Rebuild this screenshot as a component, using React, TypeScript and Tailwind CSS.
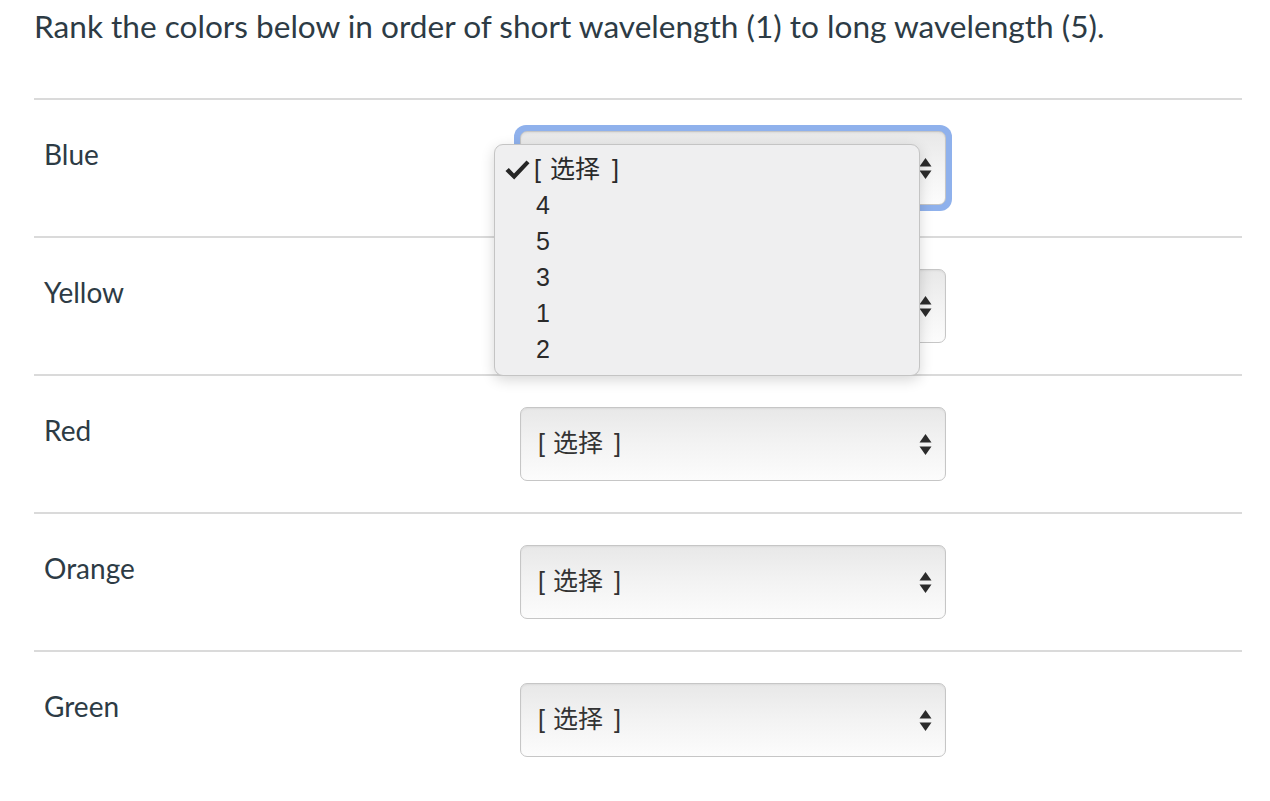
import React from "react";

const Arrows = () => (
  <svg width="13" height="23" viewBox="0 0 13 23" className="shrink-0">
    <path d="M6.5 1 L12.5 9.5 L0.5 9.5 Z" fill="#2b2b2b" />
    <path d="M6.5 22 L12.5 13.5 L0.5 13.5 Z" fill="#2b2b2b" />
  </svg>
);

const Choose = ({ gapL = 8, gapR = 11 }: { gapL?: number; gapR?: number }) => (
  <span className="inline-flex items-center">
    <span>[</span>
    <span style={{ marginLeft: gapL, marginRight: gapR }}>选择</span>
    <span>]</span>
  </span>
);

const Select = ({ focused = false }: { focused?: boolean }) => (
  <div className={focused ? "rounded-[12px] p-[6px] bg-[#8fb1ec] -m-[6px]" : ""}>
    <div className="w-[426px] h-[74px] rounded-[7px] border border-[#c6c6c6] bg-gradient-to-b from-[#e8e8e8] via-[#f3f3f3] to-[#fcfcfc] shadow-[inset_0_1px_2px_rgba(0,0,0,0.06)] flex items-center justify-between pl-[17px] pr-[13px]">
      <span className="text-[25px] text-[#333] font-['Liberation_Sans','Noto_Sans_CJK_SC',sans-serif]">
        {focused ? null : <Choose />}
      </span>
      <Arrows />
    </div>
  </div>
);

const Check = () => (
  <svg width="25" height="20" viewBox="0 0 25 20" className="shrink-0">
    <path d="M0.5 11 L3.8 8 L9 13.5 L21.5 0.5 L24.5 3.2 L9.2 19.5 Z" fill="#262626" />
  </svg>
);

const rows = ["Blue", "Yellow", "Red", "Orange", "Green"];

export default function App() {
  return (
    <div className="w-[1270px] h-[801px] bg-white overflow-hidden px-[34px] font-['Lato',sans-serif] text-[#2d3b45]">
      <h1 className="text-[31.6px] leading-[36px] pt-[8px] h-[98px] text-[#2d3b45]">
        Rank the colors below in order of short wavelength (1) to long wavelength (5).
      </h1>
      <div className="w-[1208px]">
        {rows.map((r, i) => (
          <div key={r} className="h-[138px] border-t-2 border-[#dadada] flex">
            <div className="w-[486px] pl-[10px] pt-[37px] text-[28px] leading-[34px] text-[#2d3b45]">{r}</div>
            <div className="flex items-center">
              <div className="relative">
                <Select focused={i === 0} />
                {i === 0 && (
                  <div className="absolute left-[-26px] top-[13px] w-[426px] h-[232px] z-10 rounded-[9px] border border-[#c4c4c4] bg-[#efeff0] shadow-[0_4px_14px_rgba(0,0,0,0.16)] pt-[7px] font-['Liberation_Sans','Noto_Sans_CJK_SC',sans-serif] text-[25px] text-[#2a2a2a]">
                    <div className="h-[36px] flex items-center pl-[10px] gap-[4px]">
                      <Check />
                      <span className="text-[25px]"><Choose gapL={9} gapR={12} /></span>
                    </div>
                    {["4", "5", "3", "1", "2"].map((n) => (
                      <div key={n} className="h-[36px] flex items-center pl-[41px]">{n}</div>
                    ))}
                  </div>
                )}
              </div>
            </div>
          </div>
        ))}
      </div>
    </div>
  );
}
